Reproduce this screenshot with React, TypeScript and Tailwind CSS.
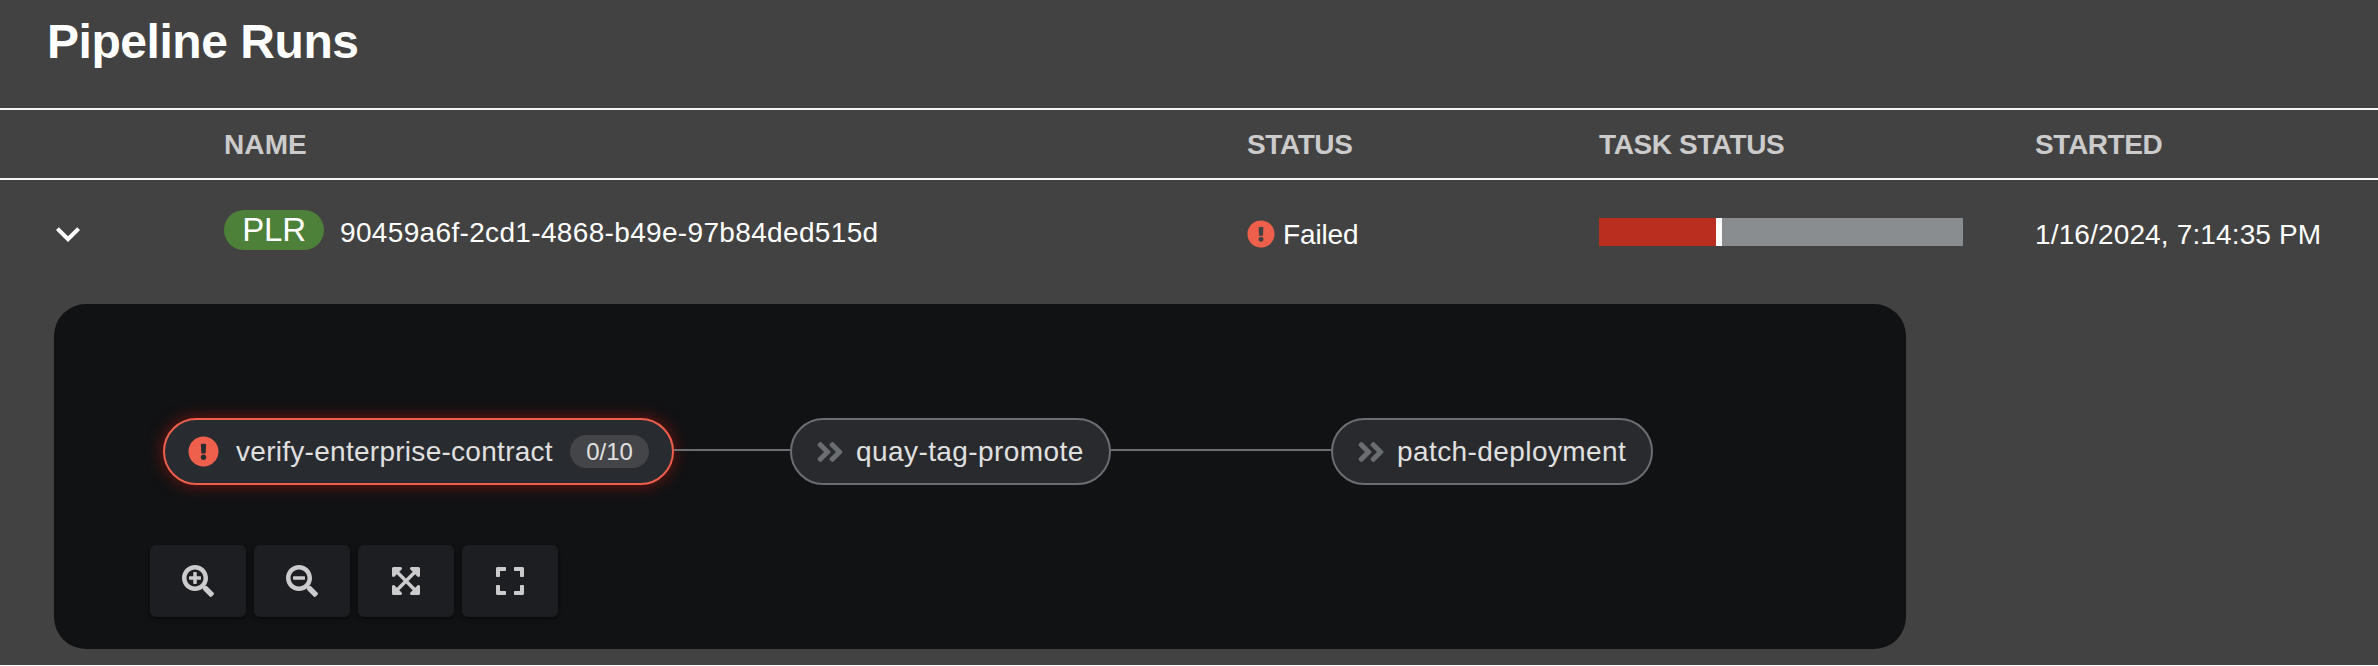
import React from "react";
import {
  FaAngleDoubleRight,
  FaExclamationCircle,
  FaExpand,
  FaExpandArrowsAlt,
  FaSearchMinus,
  FaSearchPlus,
} from "react-icons/fa";
import { MdKeyboardArrowDown } from "react-icons/md";

const COLUMNS = "grid grid-cols-[224px_1023px_352px_436px_1fr]";

function HeaderCell({ children, className = "" }: { children: React.ReactNode; className?: string }) {
  return <div className={`pt-[2px] whitespace-nowrap ${className}`}>{children}</div>;
}

function SkippedTask({ name, className }: { name: string; className: string }) {
  return (
    <div
      className={`flex h-[67px] shrink-0 items-center rounded-full border-2 border-[#6a6e73] bg-[#292a2d] pl-[24px] text-[#e0e0e0] ${className}`}
    >
      <FaAngleDoubleRight className="h-[32px] w-[28px] shrink-0 text-[#6a6e73]" />
      <span className="ml-[12px] tracking-[0.42px] whitespace-nowrap">{name}</span>
    </div>
  );
}

function ToolButton({ label, children }: { label: string; children: React.ReactNode }) {
  return (
    <button
      aria-label={label}
      className="flex h-[72px] w-[96px] items-center justify-center rounded-[6px] bg-[#1d1e21] text-[32px] text-[#cbcbcd] shadow-[0_2px_4px_rgba(0,0,0,0.5)]"
    >
      {children}
    </button>
  );
}

export default function App() {
  return (
    <div className="h-[666px] w-[2378px] overflow-hidden bg-white font-['Liberation_Sans',Arial,sans-serif] text-[28px] leading-[32px] text-white">
      <main className="h-[665px] bg-[#424242]">
        <h1 className="h-[108px] pt-[15px] pl-[47px] text-[48px] leading-[54px] font-bold tracking-[-0.45px]">
          Pipeline Runs
        </h1>
        <div className={`${COLUMNS} h-[72px] items-center border-y-2 border-[#f5f5f5] font-bold text-[#cbcbcb]`}>
          <div />
          <HeaderCell className="tracking-[0.1px]">NAME</HeaderCell>
          <HeaderCell className="tracking-[-0.4px]">STATUS</HeaderCell>
          <HeaderCell className="tracking-[-0.4px]">TASK STATUS</HeaderCell>
          <HeaderCell className="tracking-[-0.4px]">STARTED</HeaderCell>
        </div>
        <div className={`${COLUMNS} h-[124px] items-start`}>
          <div className="pt-[30px] pl-[44px]">
            <MdKeyboardArrowDown className="size-[48px]" />
          </div>
          <div className="flex pt-[30px]">
            <span className="flex h-[40px] w-[100px] items-center justify-center rounded-full bg-[#4d8039] text-[33px] tracking-[-0.2px]">
              PLR
            </span>
            <span className="ml-[16px] pt-[7px] tracking-[0.34px]">90459a6f-2cd1-4868-b49e-97b84ded515d</span>
          </div>
          <div className="flex pt-[39px]">
            <FaExclamationCircle className="mt-[1px] size-[28px] text-[#ee5f4c]" />
            <span className="ml-[8px] tracking-[-0.15px]">Failed</span>
          </div>
          <div className="flex pt-[38px]">
            <div className="h-[28px] w-[117px] bg-[#b92e1f]" />
            <div className="h-[28px] w-[6px] bg-white" />
            <div className="h-[28px] w-[241px] bg-[#8a8d90]" />
          </div>
          <div className="pt-[39px] tracking-[0.14px] whitespace-nowrap">1/16/2024, 7:14:35 PM</div>
        </div>
        <section className="ml-[54px] h-[345px] w-[1852px] rounded-[32px] bg-[#111214] pt-[114px]">
          <div className="flex pl-[109px]">
            <div className="flex h-[67px] w-[511px] shrink-0 items-center rounded-full border-2 border-[#ee5f4c] bg-[#282b2f] pl-[23px] text-[#e0e0e0] shadow-[0_0_16px_rgba(201,25,11,0.55)]">
              <FaExclamationCircle className="size-[31px] shrink-0 text-[#ee5f4c]" />
              <span className="ml-[17px] tracking-[0.28px] whitespace-nowrap">verify-enterprise-contract</span>
              <span className="mr-[23px] ml-auto flex h-[33px] w-[79px] items-center justify-center rounded-full bg-[#444548] text-[24px]">
                0/10
              </span>
            </div>
            <div className="mt-[31px] h-[2px] w-[116px] bg-[#6a6e73]" />
            <SkippedTask name="quay-tag-promote" className="w-[321px]" />
            <div className="mt-[31px] h-[2px] w-[220px] bg-[#6a6e73]" />
            <SkippedTask name="patch-deployment" className="w-[322px]" />
          </div>
          <div className="mt-[60px] flex gap-[8px] pl-[96px]">
            <ToolButton label="Zoom in"><FaSearchPlus /></ToolButton>
            <ToolButton label="Zoom out"><FaSearchMinus /></ToolButton>
            <ToolButton label="Fit to screen"><FaExpandArrowsAlt /></ToolButton>
            <ToolButton label="Reset view"><FaExpand /></ToolButton>
          </div>
        </section>
      </main>
    </div>
  );
}
